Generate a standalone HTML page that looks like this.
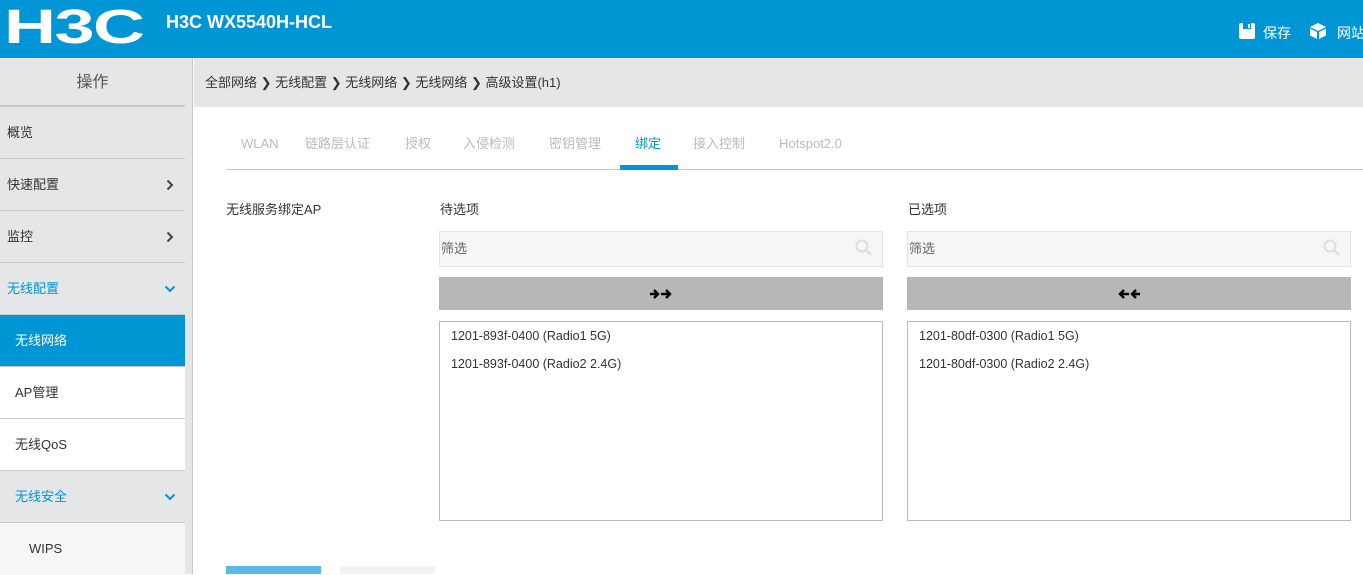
<!DOCTYPE html>
<html><head><meta charset="utf-8"><style>
*{margin:0;padding:0;box-sizing:border-box}
body{width:1363px;height:574px;overflow:hidden;background:#fff;font-family:"Liberation Sans","Noto Sans CJK SC",sans-serif;font-size:13px;color:#333;position:relative}
.top{position:absolute;left:0;top:0;width:1363px;height:58px;background:#0096d6}
.logo{position:absolute;left:4px;top:6px;color:#fff;font-size:48px;font-weight:bold;letter-spacing:-1px;font-family:"Liberation Sans",sans-serif;transform:scaleX(1.5);transform-origin:left;line-height:44px}
.title{position:absolute;left:166px;top:12px;color:#fff;font-size:18px;font-weight:bold}
.tr{position:absolute;top:23px;color:#fff;font-size:14px;white-space:nowrap}
.side{position:absolute;left:0;top:58px;width:185px;height:516px;background:#e4e6e8}
.gap{position:absolute;left:185px;top:58px;width:8px;height:516px;background:#e4e6e8;border-right:1px solid #c8c8c8}
.sh{height:49px;line-height:49px;text-align:center;font-size:16px;color:#555;border-bottom:2px solid #c8c8c8}
.it{height:52px;line-height:51px;padding-left:7px;font-size:13px;color:#333;border-bottom:1px solid #c8c8c8;position:relative}
.it.sub{padding-left:15px}
.chev{position:absolute;right:11px;top:20px}
.bc{position:absolute;left:194px;top:58px;width:1169px;height:49px;background:#e4e6e8;line-height:50px;padding-left:11px;font-size:13px;color:#333;white-space:nowrap}
.tabs{position:absolute;left:226px;top:130px;height:40px;width:1137px;border-bottom:1px solid #c8c8c8}
.tab{position:absolute;top:4px;height:20px;line-height:20px;font-size:13px;color:#bbb;white-space:nowrap}
.box{position:absolute;border:1px solid #bbb;background:#fff}
.fil{position:absolute;height:36px;border:1px solid #e2e4e4;background:#f5f7f7;line-height:34px;color:#666;padding-left:1px}
.btn{position:absolute;height:33px;background:#b7b7b7}
.li{position:absolute;font-size:12.5px;color:#333}
</style></head><body>
<div class="top">
<div class="logo">H3C</div>
<div class="title">H3C WX5540H-HCL</div>
<svg style="position:absolute;left:1238px;top:22px" width="18" height="18" viewBox="0 0 18 18"><rect x="1" y="1" width="16" height="16" rx="2" fill="#fff"/><rect x="5" y="1" width="8" height="6" fill="#0096d6"/><rect x="10" y="2" width="2" height="4" fill="#fff"/></svg>
<div class="tr" style="left:1263px">保存</div>
<svg style="position:absolute;left:1309px;top:22px" width="18" height="18" viewBox="0 0 18 18"><path d="M9 1 L17 5 L9 9 L1 5Z" fill="#fff"/><path d="M1 6.5 L8 10 V17 L1 13.5Z" fill="#fff"/><path d="M17 6.5 L10 10 V17 L17 13.5Z" fill="#fff"/></svg>
<div class="tr" style="left:1337px">网站</div>
</div>
<div class="side">
<div class="sh">操作</div>
<div class="it">概览</div>
<div class="it">快速配置<svg class="chev" width="8" height="12"><path d="M1.5 1.5 L6 6 L1.5 10.5" stroke="#444" stroke-width="2" fill="none"/></svg></div>
<div class="it">监控<svg class="chev" width="8" height="12"><path d="M1.5 1.5 L6 6 L1.5 10.5" stroke="#444" stroke-width="2" fill="none"/></svg></div>
<div class="it" style="color:#0096d6">无线配置<svg class="chev" style="top:22px;right:9px" width="12" height="8"><path d="M1.5 1.5 L6 6 L10.5 1.5" stroke="#0096d6" stroke-width="2" fill="none"/></svg></div>
<div class="it sub" style="background:#0096d6;color:#fff">无线网络</div>
<div class="it sub" style="background:#fff">AP管理</div>
<div class="it sub" style="background:#fff">无线QoS</div>
<div class="it sub" style="color:#0096d6">无线安全<svg class="chev" style="top:22px;right:9px" width="12" height="8"><path d="M1.5 1.5 L6 6 L10.5 1.5" stroke="#0096d6" stroke-width="2" fill="none"/></svg></div>
<div class="it" style="background:#f5f7f7;padding-left:29px;border:none">WIPS</div>
</div>
<div class="gap"></div>
<div class="bc">全部网络 ❯ 无线配置 ❯ 无线网络 ❯ 无线网络 ❯ 高级设置(h1)</div>
<div class="tabs">
<span class="tab" style="left:15px">WLAN</span>
<span class="tab" style="left:79px">链路层认证</span>
<span class="tab" style="left:179px">授权</span>
<span class="tab" style="left:237px">入侵检测</span>
<span class="tab" style="left:323px">密钥管理</span>
<span class="tab" style="left:409px;color:#0096d6">绑定</span>
<span class="tab" style="left:467px">接入控制</span>
<span class="tab" style="left:553px">Hotspot2.0</span>
<div style="position:absolute;left:394px;top:35px;width:58px;height:5px;background:#0096d6"></div>
</div>
<div style="position:absolute;left:226px;top:199px">无线服务绑定AP</div>
<div style="position:absolute;left:440px;top:199px">待选项</div>
<div style="position:absolute;left:908px;top:199px">已选项</div>
<div class="fil" style="left:439px;top:231px;width:444px">筛选</div>
<div class="fil" style="left:907px;top:231px;width:444px">筛选</div>
<svg style="position:absolute;left:855px;top:239px" width="18" height="18"><circle cx="7" cy="7" r="5.5" stroke="#ddd" stroke-width="2" fill="none"/><path d="M11 11 L16 16" stroke="#ddd" stroke-width="2.5"/></svg>
<svg style="position:absolute;left:1323px;top:239px" width="18" height="18"><circle cx="7" cy="7" r="5.5" stroke="#ddd" stroke-width="2" fill="none"/><path d="M11 11 L16 16" stroke="#ddd" stroke-width="2.5"/></svg>
<div class="btn" style="left:439px;top:277px;width:444px"><svg style="position:absolute;left:210px;top:11px" width="24" height="12"><path d="M1 6H9M5 2L9 6L5 10M12 6H21M17 2L21 6L17 10" stroke="#000" stroke-width="2.4" fill="none"/></svg></div>
<div class="btn" style="left:907px;top:277px;width:444px"><svg style="position:absolute;left:210px;top:11px;transform:scaleX(-1)" width="24" height="12"><path d="M1 6H9M5 2L9 6L5 10M12 6H21M17 2L21 6L17 10" stroke="#000" stroke-width="2.4" fill="none"/></svg></div>
<div class="box" style="left:439px;top:321px;width:444px;height:200px"></div>
<div class="box" style="left:907px;top:321px;width:444px;height:200px"></div>
<div class="li" style="left:451px;top:329px">1201-893f-0400 (Radio1 5G)</div>
<div class="li" style="left:451px;top:357px">1201-893f-0400 (Radio2 2.4G)</div>
<div class="li" style="left:919px;top:329px">1201-80df-0300 (Radio1 5G)</div>
<div class="li" style="left:919px;top:357px">1201-80df-0300 (Radio2 2.4G)</div>
<div style="position:absolute;left:226px;top:566px;width:95px;height:8px;background:#5bb9e4"></div>
<div style="position:absolute;left:340px;top:566px;width:95px;height:8px;background:#f3f3f3"></div>
</body></html>
